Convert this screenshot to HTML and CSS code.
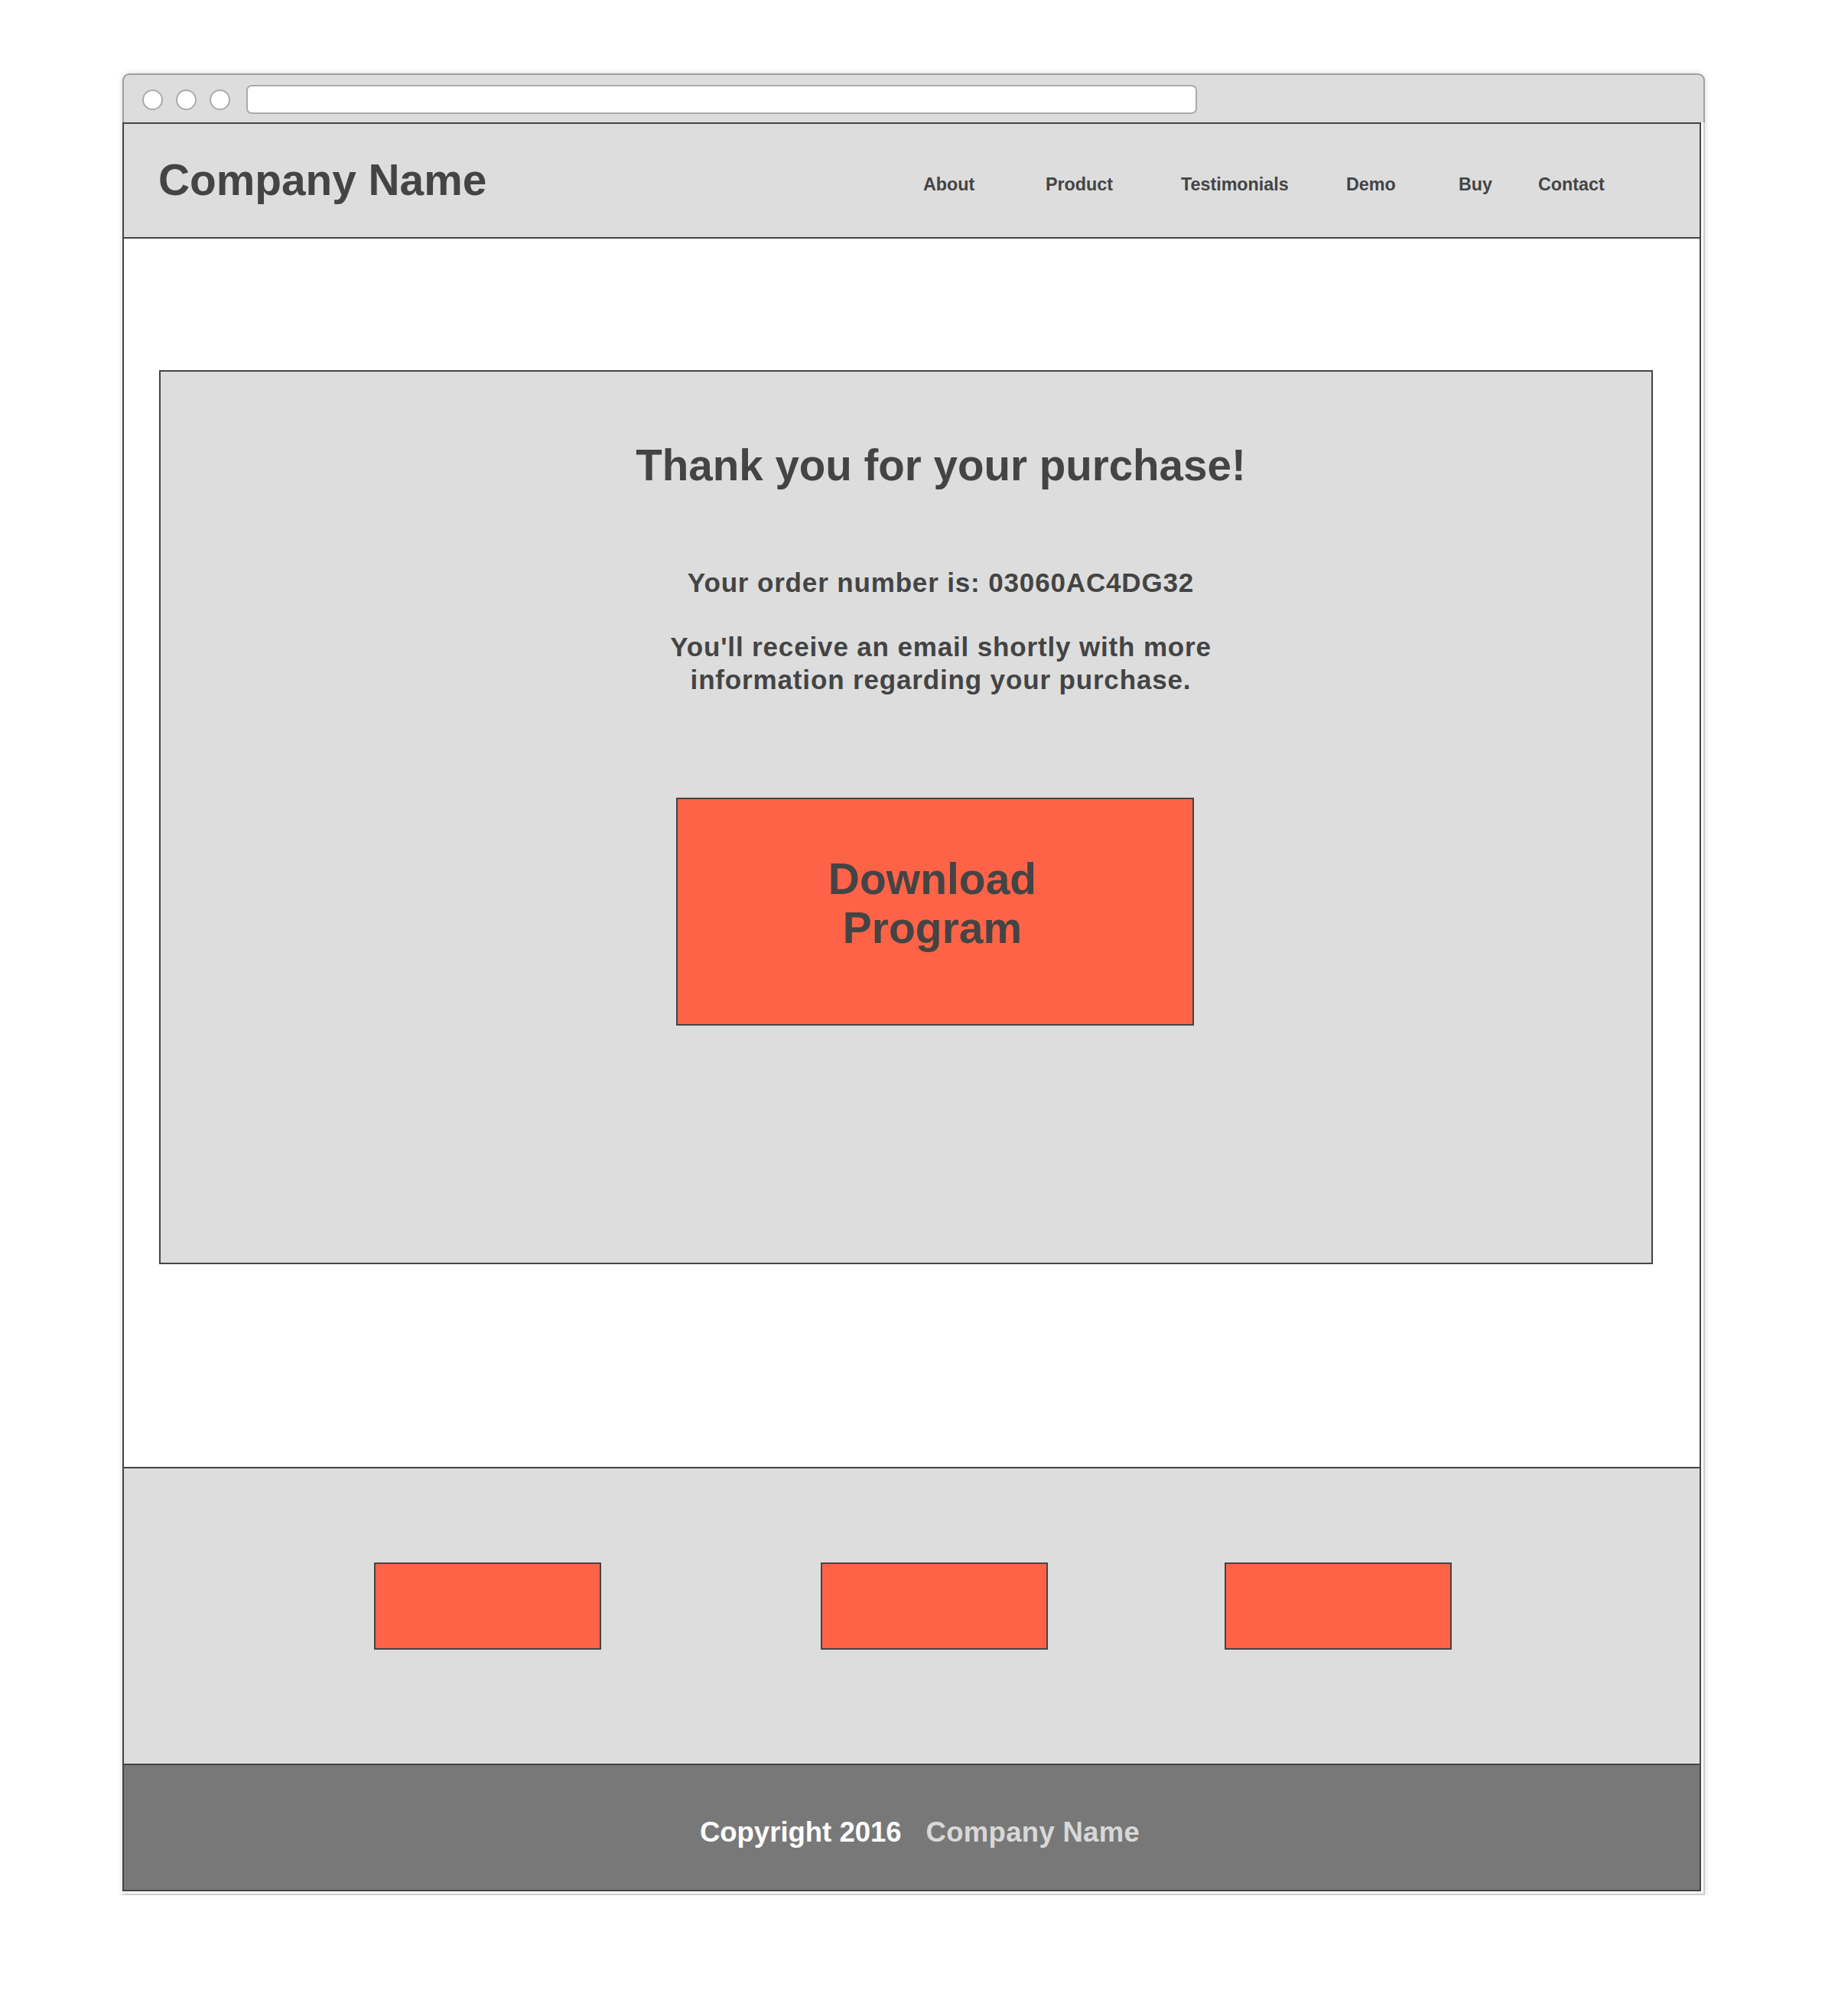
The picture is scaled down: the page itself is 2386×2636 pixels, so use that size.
FILE: index.html
```html
<!DOCTYPE html>
<html lang="en">
<head>
<meta charset="utf-8">
<title>Thank you</title>
<link rel="stylesheet" href="styles.css">
</head>
<body>
<div class="window">
  <div class="chrome">
    <span class="dot"></span>
    <span class="dot"></span>
    <span class="dot dot-last"></span>
    <div class="url"></div>
  </div>
  <div class="frame">
    <div class="page">
      <header class="header">
        <div class="brand">Company Name</div>
        <nav class="nav">
          <a href="#">About</a>
          <a href="#">Product</a>
          <a href="#">Testimonials</a>
          <a href="#">Demo</a>
          <a href="#">Buy</a>
          <a href="#">Contact</a>
        </nav>
      </header>
      <main class="main">
        <section class="card">
          <h1 class="title">Thank you for your purchase!</h1>
          <p class="order">Your order number is: 03060AC4DG32</p>
          <p class="info">You'll receive an email shortly with more<br>information regarding your purchase.</p>
          <div class="cta-row"><a class="cta" href="#">Download<br>Program</a></div>
        </section>
      </main>
      <section class="links">
        <div class="lbox lbox-1"></div>
        <div class="lbox lbox-2"></div>
        <div class="lbox lbox-3"></div>
      </section>
      <footer class="footer">
        <span class="copy">Copyright 2016</span>
        <span class="fname">Company Name</span>
      </footer>
    </div>
  </div>
</div>
</body>
</html>
```
FILE: styles.css
```css
* { box-sizing: border-box; }

body {
  margin: 0;
  background: #fff;
  font-family: "Liberation Sans", Arial, sans-serif;
  font-weight: bold;
  color: #444;
}

.window {
  width: 2069px;
  margin: 96px 0 0 160px;
  background: #fff;
  border-radius: 9px 9px 0 0;
  box-shadow: 0 0 7px rgba(0, 0, 0, 0.16);
}

.chrome {
  height: 64px;
  display: flex;
  align-items: center;
  padding: 2px 0 0 24px;
  background: #ddd;
  border: 2px solid #a0a0a0;
  border-bottom: 0;
  border-radius: 9px 9px 0 0;
}

.dot {
  width: 27px;
  height: 27px;
  margin-right: 17px;
  border: 2px solid #aaa;
  border-radius: 50%;
  background: #fff;
  flex: 0 0 auto;
}

.dot-last { margin-right: 21px; }

.url {
  width: 1243px;
  height: 38px;
  border: 2px solid #aaa;
  border-radius: 7px;
  background: #fff;
}

.frame {
  border-right: 2px solid #ccc;
  border-bottom: 2px solid #ccc;
  padding: 0 3px 3px 0;
}

.page {
  border: 2px solid #444;
  background: #fff;
}

.header {
  height: 150px;
  display: flex;
  align-items: flex-start;
  background: #ddd;
  border-bottom: 2px solid #444;
}

.brand {
  flex: 0 0 1045px;
  padding-left: 45px;
  margin-top: 42px;
  font-size: 56.8px;
  line-height: 64px;
}

.nav {
  display: grid;
  grid-template-columns: 160px 177px 216px 147px 104px auto;
  margin-top: 65px;
  font-size: 23.3px;
  line-height: 28px;
}

.nav a {
  color: #444;
  text-decoration: none;
}

.main {
  padding: 172px 61px 265px 46px;
  background: #fff;
}

.card {
  padding: 91px 0 310px 91px;
  background: #ddd;
  border: 2px solid #444;
  text-align: center;
}

.title {
  margin: 0;
  font-size: 56.5px;
  line-height: 64px;
  font-weight: bold;
}

.order,
.info {
  font-size: 35px;
  line-height: 43px;
  letter-spacing: 0.85px;
}

.order { margin: 99px 0 0; }
.info { margin: 41px 0 0; }

.cta-row {
  display: flex;
  justify-content: center;
  margin-top: 133px;
  padding-right: 15px;
}

.cta {
  display: block;
  width: 677px;
  height: 298px;
  padding: 72px 7px 0 0;
  background: #ff6347;
  border: 2px solid #444;
  color: #444;
  text-decoration: none;
  font-size: 57px;
  line-height: 64px;
  text-align: center;
}

.links {
  height: 388px;
  display: flex;
  align-items: flex-start;
  padding-top: 123px;
  background: #ddd;
  border-top: 2px solid #444;
}

.lbox {
  width: 297px;
  height: 114px;
  background: #ff6347;
  border: 2px solid #444;
}

.lbox-1 { margin-left: 327px; }
.lbox-2 { margin-left: 287px; }
.lbox-3 { margin-left: 231px; }

.footer {
  height: 165px;
  display: flex;
  justify-content: center;
  gap: 32px;
  padding: 67px 0 0 21px;
  background: #787878;
  border-top: 2px solid #444;
  font-size: 36.5px;
  line-height: 41px;
}

.copy { color: #fff; }
.fname { color: #d8d8d8; letter-spacing: 0.3px; }
```
